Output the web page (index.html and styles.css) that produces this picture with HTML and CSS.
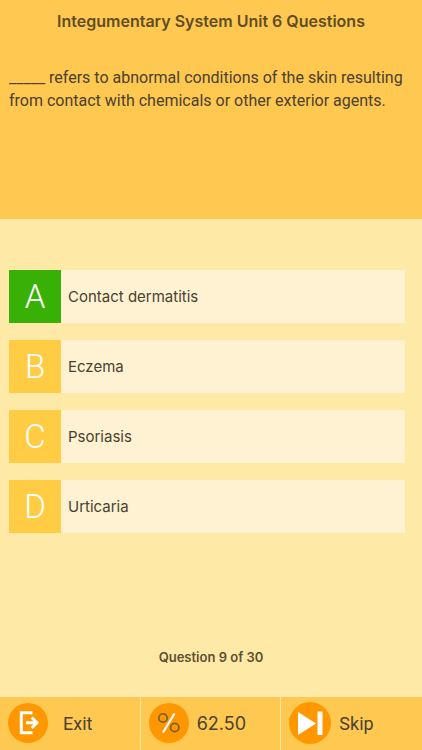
FILE: index.html
```html
<!DOCTYPE html>
<html lang="en">

<head>
    <meta charset="UTF-8">
    <meta name="viewport" content="width=device-width, initial-scale=1.0">
    <title>Integumentary System Unit 6 Questions</title>
    <link rel="stylesheet" href="styles.css">
</head>

<body>
    <header class="question">
        <h1>Integumentary System Unit 6 Questions</h1>
        <p>_____ refers to abnormal conditions of the skin resulting from contact with chemicals or other exterior agents.</p>
    </header>

    <main class="answers">
        <button class="answer correct">
            <span class="letter">A</span>
            <span class="text">Contact dermatitis</span>
        </button>
        <button class="answer">
            <span class="letter">B</span>
            <span class="text">Eczema</span>
        </button>
        <button class="answer">
            <span class="letter">C</span>
            <span class="text">Psoriasis</span>
        </button>
        <button class="answer">
            <span class="letter">D</span>
            <span class="text">Urticaria</span>
        </button>
    </main>

    <p class="progress">Question 9 of 30</p>

    <footer class="toolbar">
        <button class="tool exit">
            <svg width="40" height="40" viewBox="0 0 40 40" aria-hidden="true">
                <circle cx="20" cy="20" r="20" fill="#ff9800" />
                <path d="M24.500 9.700H13.300V29.700H24.500" fill="none" stroke="#fff" stroke-width="3" />
                <path d="M18 19.700H28M23.700 14.500L29 19.700L23.700 25" fill="none" stroke="#fff" stroke-width="3" />
            </svg>
            <span>Exit</span>
        </button>
        <div class="tool">
            <svg width="40" height="40" viewBox="0 0 40 40" aria-hidden="true">
                <circle cx="20" cy="20" r="20" fill="#ff9800" />
                <circle cx="14" cy="15" r="4.200" fill="none" stroke="#80602a" stroke-width="1.800" />
                <circle cx="25.700" cy="24.500" r="4.200" fill="none" stroke="#80602a" stroke-width="1.800" />
                <path d="M25.500 10.500L14 29.500" stroke="#fff" stroke-width="2.200" />
            </svg>
            <span>62.50</span>
        </div>
        <button class="tool">
            <svg width="42" height="42" viewBox="0 0 42 42" aria-hidden="true">
                <circle cx="21" cy="21" r="21" fill="#ff9800" />
                <path d="M9 10L27 21.500L9 33Z" fill="#fff" />
                <path d="M28.500 9.500H33.500V33H28.500Z" fill="#fff" />
            </svg>
            <span>Skip</span>
        </button>
    </footer>
</body>

</html>
```
FILE: styles.css
```css
* {
    margin: 0px;
    padding: 0px;
    box-sizing: border-box;
}

body {
    display: flex;
    flex-direction: column;
    min-height: 100vh;
    font-family: "Inter", sans-serif;
    background: #ffe9a6;
    color: #4a4130;
}

button {
    border: none;
    background: transparent;
    font-family: inherit;
    color: inherit;
    cursor: pointer;
}

.question {
    min-height: 219px;
    padding: 10px 9px;
    background: #ffc850;
}

.question h1 {
    margin-bottom: 34px;
    font-size: 16px;
    line-height: 22px;
    font-weight: 600;
    text-align: center;
    color: #5f4d24;
}

.question p {
    font-family: "Roboto", sans-serif;
    font-size: 16px;
    line-height: 23px;
}

.answers {
    display: flex;
    flex-direction: column;
    gap: 17px;
    padding: 51px 17px 0px 9px;
}

.answer {
    display: flex;
    align-items: stretch;
    min-height: 53px;
    background: #fff2d3;
    text-align: left;
}

.answer .letter {
    width: 52px;
    flex-shrink: 0;
    background: #ffcc44;
    color: white;
    font-family: "Roboto", sans-serif;
    font-size: 33px;
    line-height: 53px;
    font-weight: 300;
    text-align: center;
}

.answer.correct .letter {
    background: #38b006;
}

.answer .text {
    align-self: center;
    padding: 0px 7px;
    font-size: 15px;
    line-height: 20px;
}

.progress {
    margin-top: auto;
    padding: 16px 0px 30px;
    font-size: 13px;
    line-height: 20px;
    font-weight: 600;
    text-align: center;
    color: #5c5030;
}

.toolbar {
    display: grid;
    grid-template-columns: repeat(3, 1fr);
    background: #ffc850;
}

.tool {
    display: flex;
    align-items: center;
    gap: 8px;
    height: 53px;
    padding: 0px 8px 2px;
    border-right: 1px solid #ffe9a6;
    font-size: 18px;
}

button.tool {
    font-family: "Roboto", sans-serif;
}

.tool:last-child {
    border-right: none;
}

.tool.exit {
    gap: 15px;
}

.tool span {
    padding-top: 2px;
}
```
